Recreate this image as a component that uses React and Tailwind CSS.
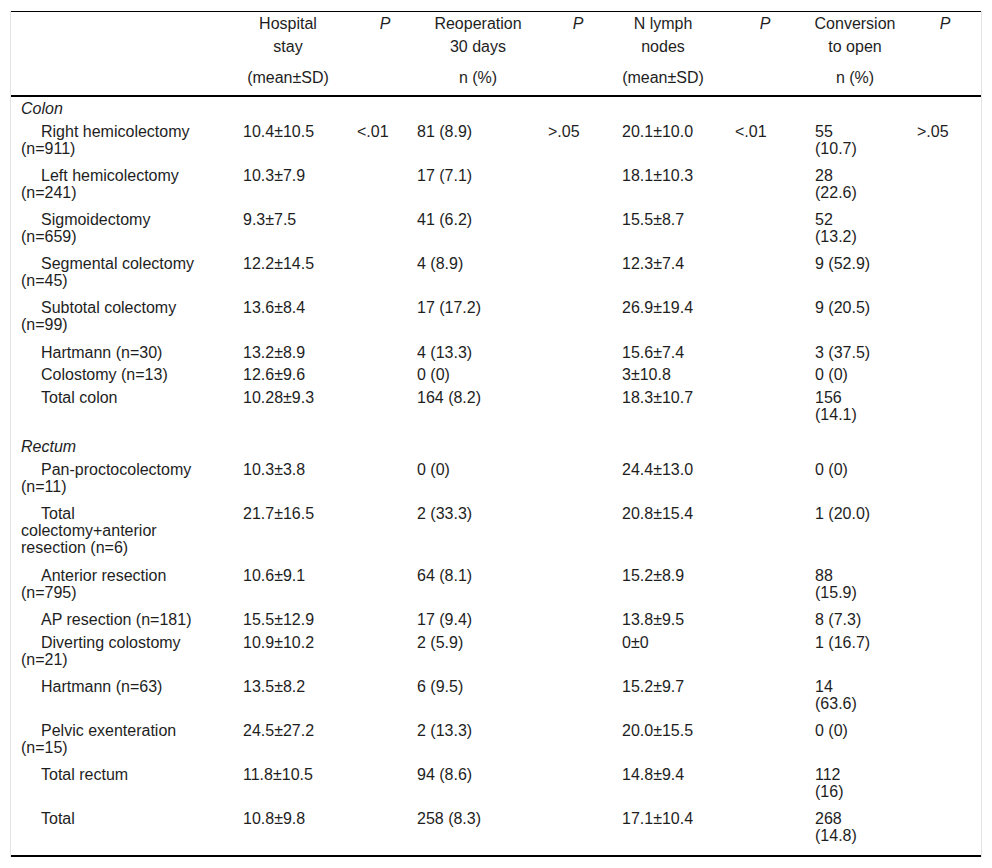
import React from "react";

const rows = [
  { section: "Colon", h: "h-[23px]" },
  { label: "Right hemicolectomy (n=911)", v: ["10.4±10.5", "<.01", "81 (8.9)", ">.05", "20.1±10.0", "<.01", "55 (10.7)", ">.05"], h: "h-[44px]" },
  { label: "Left hemicolectomy (n=241)", v: ["10.3±7.9", "", "17 (7.1)", "", "18.1±10.3", "", "28 (22.6)", ""], h: "h-[44px]" },
  { label: "Sigmoidectomy (n=659)", v: ["9.3±7.5", "", "41 (6.2)", "", "15.5±8.7", "", "52 (13.2)", ""], h: "h-[44px]" },
  { label: "Segmental colectomy (n=45)", v: ["12.2±14.5", "", "4 (8.9)", "", "12.3±7.4", "", "9 (52.9)", ""], h: "h-[44px]" },
  { label: "Subtotal colectomy (n=99)", v: ["13.6±8.4", "", "17 (17.2)", "", "26.9±19.4", "", "9 (20.5)", ""], h: "h-[45px]" },
  { label: "Hartmann (n=30)", v: ["13.2±8.9", "", "4 (13.3)", "", "15.6±7.4", "", "3 (37.5)", ""], h: "h-[22px]" },
  { label: "Colostomy (n=13)", v: ["12.6±9.6", "", "0 (0)", "", "3±10.8", "", "0 (0)", ""], h: "h-[23px]" },
  { label: "Total colon", v: ["10.28±9.3", "", "164 (8.2)", "", "18.3±10.7", "", "156 (14.1)", ""], h: "h-[49px]" },
  { section: "Rectum", h: "h-[23px]" },
  { label: "Pan-proctocolectomy (n=11)", v: ["10.3±3.8", "", "0 (0)", "", "24.4±13.0", "", "0 (0)", ""], h: "h-[44px]" },
  { label: "Total colectomy+anterior resection (n=6)", v: ["21.7±16.5", "", "2 (33.3)", "", "20.8±15.4", "", "1 (20.0)", ""], h: "h-[62px]" },
  { label: "Anterior resection (n=795)", v: ["10.6±9.1", "", "64 (8.1)", "", "15.2±8.9", "", "88 (15.9)", ""], h: "h-[44px]" },
  { label: "AP resection (n=181)", v: ["15.5±12.9", "", "17 (9.4)", "", "13.8±9.5", "", "8 (7.3)", ""], h: "h-[23px]" },
  { label: "Diverting colostomy (n=21)", v: ["10.9±10.2", "", "2 (5.9)", "", "0±0", "", "1 (16.7)", ""], h: "h-[44px]" },
  { label: "Hartmann (n=63)", v: ["13.5±8.2", "", "6 (9.5)", "", "15.2±9.7", "", "14 (63.6)", ""], h: "h-[44px]" },
  { label: "Pelvic exenteration (n=15)", v: ["24.5±27.2", "", "2 (13.3)", "", "20.0±15.5", "", "0 (0)", ""], h: "h-[44px]" },
  { label: "Total rectum", v: ["11.8±10.5", "", "94 (8.6)", "", "14.8±9.4", "", "112 (16)", ""], h: "h-[44px]" },
  { label: "Total", v: ["10.8±9.8", "", "258 (8.3)", "", "17.1±10.4", "", "268 (14.8)", ""], h: "h-[48px]" },
];

const valCls = [
  "pl-[8px] pr-[4px]",
  "pl-[8px] pr-0",
  "pl-[8px] pr-[4px]",
  "pl-[8px] pr-0",
  "pl-[8px] pr-[4px]",
  "pl-[8px] pr-0",
  "pl-[8px] pr-[37px]",
  "pl-[8px] pr-0",
];

const head1 = [
  { t: ["Hospital", "stay"], c: "pl-[10px] pr-[18px]" },
  { t: ["P"], c: "pl-[12px] pr-0 italic" },
  { t: ["Reoperation", "30 days"], c: "pl-[21px] pr-[14px]" },
  { t: ["P"], c: "pl-[6px] pr-[4px] italic" },
  { t: ["N lymph", "nodes"], c: "pl-[4px] pr-[19px]" },
  { t: ["P"], c: "pl-0 pr-[4px] italic" },
  { t: ["Conversion", "to open"], c: "pl-[4px] pr-[10px]" },
  { t: ["P"], c: "pl-0 pr-0 italic" },
];

const head2 = [
  { t: "(mean±SD)", c: "pl-[10px] pr-[18px]" },
  { t: "", c: "" },
  { t: "n (%)", c: "pl-[21px] pr-[14px]" },
  { t: "", c: "" },
  { t: "(mean±SD)", c: "pl-[4px] pr-[19px]" },
  { t: "", c: "" },
  { t: "n (%)", c: "pl-[4px] pr-[10px]" },
  { t: "", c: "" },
];

export default function App() {
  return (
    <div className="min-h-[868px] bg-white pt-[11px] font-['Liberation_Sans',Arial,sans-serif] text-[16px] leading-[17px] text-[#1e1e1e]">
      <div className="ml-[10px] w-[972px] border-x border-[#e4e4e4]">
        <table className="w-[970px] table-fixed border-separate border-spacing-0 border-t border-b-2 border-black">
          <colgroup>
            <col className="w-[224px]" />
            <col className="w-[114px]" />
            <col className="w-[60px]" />
            <col className="w-[131px]" />
            <col className="w-[74px]" />
            <col className="w-[113px]" />
            <col className="w-[80px]" />
            <col className="w-[102px]" />
            <col className="w-[72px]" />
          </colgroup>
          <thead>
            <tr className="h-[52px]">
              <th className="p-0"></th>
              {head1.map((h, i) => (
                <th key={i} className={`align-top pt-0 text-center font-normal leading-[23px] ${h.c}`}>
                  {h.t.map((l, j) => (
                    <div key={j}>{l}</div>
                  ))}
                </th>
              ))}
            </tr>
            <tr className="h-[33px]">
              <th className="border-b-2 border-black p-0"></th>
              {head2.map((h, i) => (
                <th key={i} className={`align-top pt-[3px] text-center font-normal leading-[22px] border-b-2 border-black ${h.c}`}>
                  {h.t}
                </th>
              ))}
            </tr>
          </thead>
          <tbody>
            {rows.map((r, i) =>
              r.section ? (
                <tr key={i} className={r.h}>
                  <td colSpan={9} className="align-top pt-[3px] pl-[10px] italic">
                    {r.section}
                  </td>
                </tr>
              ) : (
                <tr key={i} className={r.h}>
                  <td className="align-top pt-[3px] pl-[10px] pr-[34px] indent-[20px]">{r.label}</td>
                  {r.v.map((v, j) => (
                    <td key={j} className={`align-top pt-[3px] text-left ${valCls[j]}`}>
                      {v}
                    </td>
                  ))}
                </tr>
              )
            )}
          </tbody>
        </table>
      </div>
    </div>
  );
}
